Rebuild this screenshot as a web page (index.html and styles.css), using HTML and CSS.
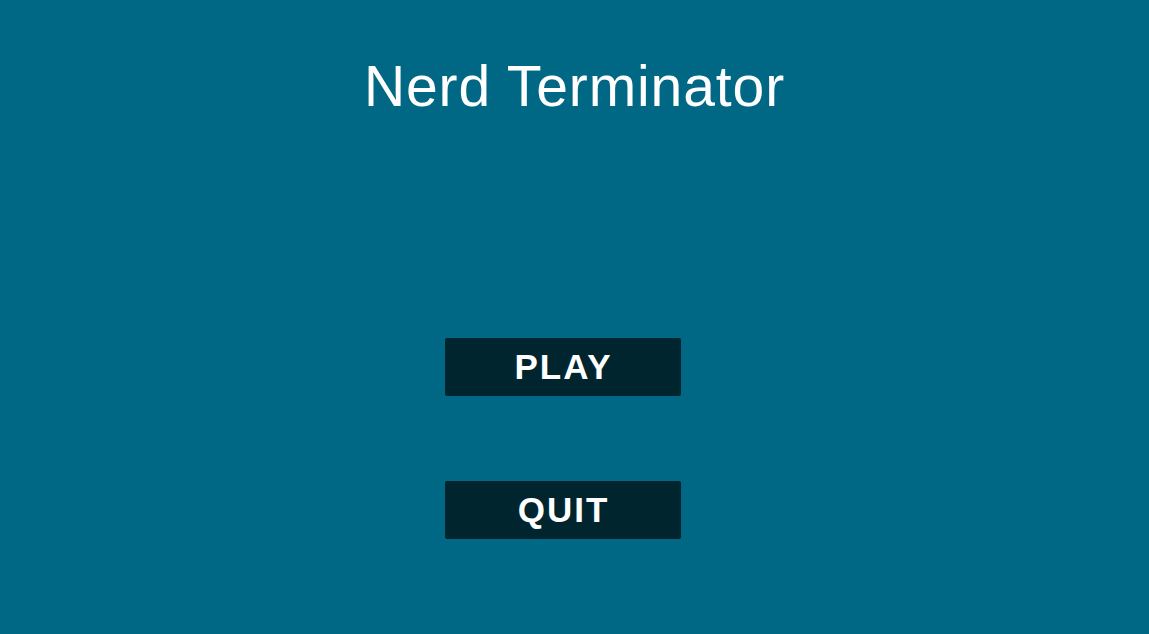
FILE: index.html
```html
<!DOCTYPE html>
<html>
<head>
<meta charset="utf-8">
<link rel="stylesheet" href="styles.css">
</head>
<body>
<main class="screen">
  <h1 class="title">Nerd Terminator</h1>
  <div class="menu">
    <button class="btn">PLAY</button>
    <button class="btn">QUIT</button>
  </div>
</main>
</body>
</html>
```
FILE: styles.css
```css
html, body {
  margin: 0;
  padding: 0;
  height: 100%;
}
body {
  background: #006884;
}
.screen {
  display: flex;
  flex-direction: column;
  align-items: center;
  height: 100%;
}
.title {
  margin: 58px 0 0 0;
  font-family: "Liberation Sans", Arial, sans-serif;
  font-weight: 400;
  font-size: 57px;
  line-height: 57px;
  letter-spacing: 0.9px;
  color: #ffffff;
}
.menu {
  display: flex;
  flex-direction: column;
  gap: 85px;
  margin-top: 223px;
  margin-right: 24px;
}
.btn {
  width: 236px;
  height: 58px;
  border: none;
  border-radius: 2px;
  background: #00252e;
  color: #ffffff;
  font-family: "Liberation Sans", Arial, sans-serif;
  font-weight: 700;
  font-size: 35px;
  letter-spacing: 2px;
  padding: 0 0 0 2px;
  display: flex;
  align-items: center;
  justify-content: center;
}
```
